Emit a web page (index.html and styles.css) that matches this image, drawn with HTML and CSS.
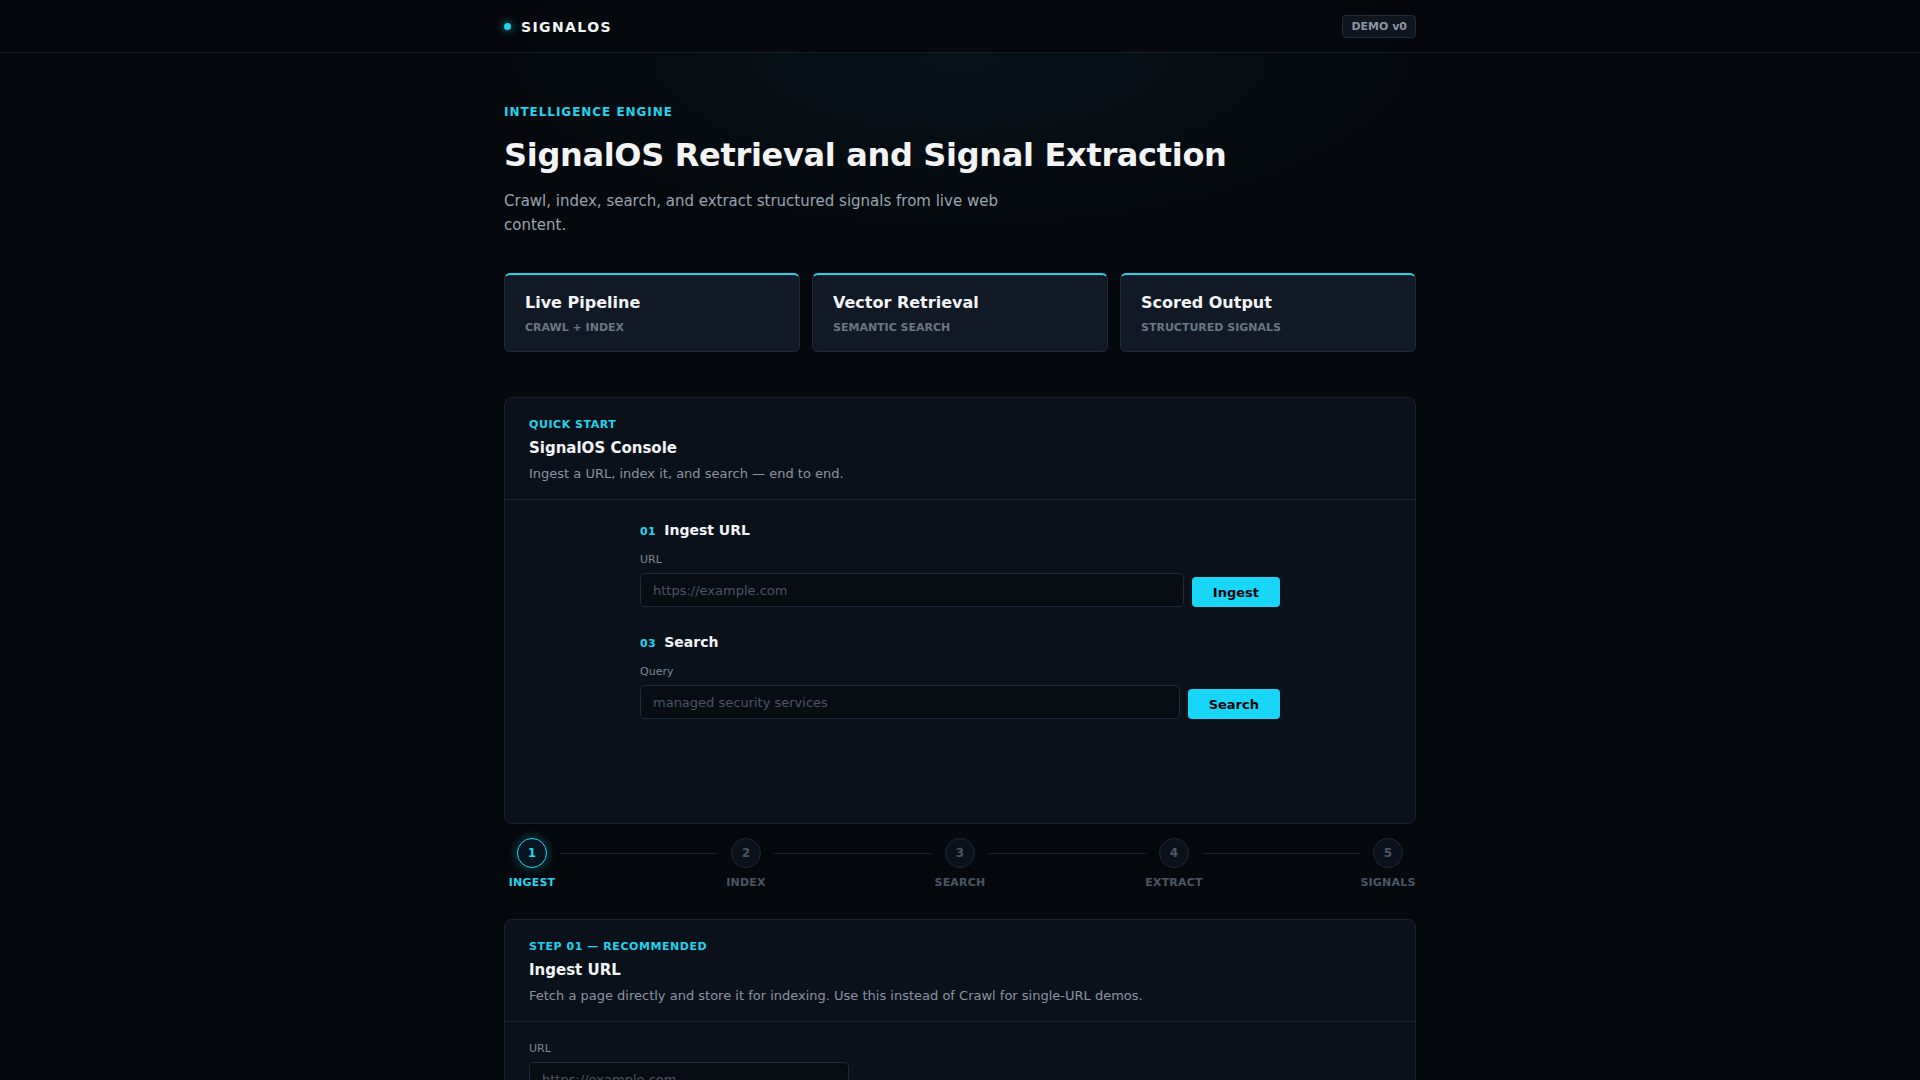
FILE: index.html
```html
<!DOCTYPE html>
<html lang="en">
<head>
<meta charset="UTF-8">
<meta name="viewport" content="width=device-width, initial-scale=1.0">
<title>SignalOS</title>
<link rel="stylesheet" href="styles.css">
</head>
<body>

<header class="topbar">
    <div class="topbar-inner">
        <div class="brand"><span class="brand-dot"></span>SIGNALOS</div>
        <span class="badge">DEMO v0</span>
    </div>
</header>

<main class="page">
    <section class="hero">
        <p class="eyebrow">INTELLIGENCE ENGINE</p>
        <h1>SignalOS Retrieval and Signal Extraction</h1>
        <p class="lead">Crawl, index, search, and extract structured signals from live web content.</p>
    </section>

    <div class="features">
        <div class="feature">
            <h3>Live Pipeline</h3>
            <p>CRAWL + INDEX</p>
        </div>
        <div class="feature">
            <h3>Vector Retrieval</h3>
            <p>SEMANTIC SEARCH</p>
        </div>
        <div class="feature">
            <h3>Scored Output</h3>
            <p>STRUCTURED SIGNALS</p>
        </div>
    </div>

    <div class="panel">
        <div class="panel-head">
            <p class="kicker">QUICK START</p>
            <h2>SignalOS Console</h2>
            <p class="desc">Ingest a URL, index it, and search — end to end.</p>
        </div>
        <div class="panel-body console-body">
            <div class="console-form">
                <div class="step-block">
                    <h4><span class="num">01</span>Ingest URL</h4>
                    <label class="field-label">URL</label>
                    <div class="field-row">
                        <input type="text" class="field" placeholder="https://example.com">
                        <button class="btn">Ingest</button>
                    </div>
                </div>
                <div class="step-block">
                    <h4><span class="num">03</span>Search</h4>
                    <label class="field-label">Query</label>
                    <div class="field-row">
                        <input type="text" class="field" placeholder="managed security services">
                        <button class="btn btn-wide">Search</button>
                    </div>
                </div>
            </div>
        </div>
    </div>

    <div class="stepper">
        <div class="step active"><span class="circle">1</span><span class="step-name">INGEST</span></div>
        <div class="connector"></div>
        <div class="step"><span class="circle">2</span><span class="step-name">INDEX</span></div>
        <div class="connector"></div>
        <div class="step"><span class="circle">3</span><span class="step-name">SEARCH</span></div>
        <div class="connector"></div>
        <div class="step"><span class="circle">4</span><span class="step-name">EXTRACT</span></div>
        <div class="connector"></div>
        <div class="step"><span class="circle">5</span><span class="step-name">SIGNALS</span></div>
    </div>

    <div class="panel">
        <div class="panel-head">
            <p class="kicker">STEP 01 — RECOMMENDED</p>
            <h2>Ingest URL</h2>
            <p class="desc">Fetch a page directly and store it for indexing. Use this instead of Crawl for single-URL demos.</p>
        </div>
        <div class="panel-body">
            <label class="field-label">URL</label>
            <input type="text" class="field field-short" placeholder="https://example.com">
        </div>
    </div>
</main>

</body>
</html>
```

FILE: styles.css
```css
* {
    box-sizing: border-box;
}

body {
    font-family: "DejaVu Sans", sans-serif;
    background-color: #05080d;
    background-image: radial-gradient(ellipse 520px 200px at 50% 52px, rgba(34, 211, 238, 0.05), transparent);
    background-repeat: no-repeat;
    color: #f3f4f6;
    margin: 0;
    padding: 0;
}

p, h1, h2, h3, h4 {
    margin: 0;
}

.topbar {
    height: 53px;
    border-bottom: 1px solid #161c25;
    background-color: rgba(5, 8, 12, 0.9);
}

.topbar-inner {
    max-width: 912px;
    height: 52px;
    margin: 0 auto;
    display: flex;
    align-items: center;
    justify-content: space-between;
}

.brand {
    display: flex;
    align-items: center;
    gap: 10px;
    font-size: 14px;
    font-weight: bold;
    letter-spacing: 0.1em;
    color: #f3f4f6;
    padding-top: 1px;
}

.brand-dot {
    width: 7px;
    height: 7px;
    border-radius: 50%;
    background-color: #22d3ee;
    box-shadow: 0 0 9px rgba(34, 211, 238, 0.85);
}

.badge {
    font-size: 11px;
    font-weight: bold;
    line-height: 15px;
    color: #8a94a3;
    background-color: #0f151e;
    border: 1px solid #222b38;
    border-radius: 4px;
    padding: 3px 8px;
}

.page {
    max-width: 912px;
    margin: 0 auto;
    padding-bottom: 40px;
}

.hero {
    padding-top: 51px;
}

.eyebrow {
    font-size: 12px;
    font-weight: bold;
    line-height: 16px;
    letter-spacing: 0.08em;
    color: #22d3ee;
}

.hero h1 {
    margin-top: 15px;
    font-size: 32px;
    line-height: 40px;
    letter-spacing: -0.01em;
    color: #f3f4f6;
}

.lead {
    margin-top: 14px;
    max-width: 520px;
    font-size: 15px;
    line-height: 24px;
    color: #9aa3af;
}

.features {
    display: grid;
    grid-template-columns: repeat(3, 1fr);
    gap: 12px;
    margin-top: 36px;
}

.feature {
    background-color: #111926;
    border: 1px solid #1f2937;
    border-top: 2px solid #22d3ee;
    border-radius: 6px;
    padding: 17px 20px 16px;
}

.feature h3 {
    font-size: 16px;
    line-height: 22px;
    color: #f3f4f6;
}

.feature p {
    margin-top: 7px;
    font-size: 11px;
    font-weight: bold;
    line-height: 14px;
    color: #6b7584;
}

.panel {
    background-color: #0b111a;
    border: 1px solid #1a2230;
    border-radius: 8px;
    margin-top: 45px;
}

.panel-head {
    padding: 19px 24px 15px;
    border-bottom: 1px solid #1a2230;
}

.kicker {
    font-size: 11px;
    font-weight: bold;
    line-height: 16px;
    letter-spacing: 0.05em;
    color: #22d3ee;
}

.panel-head h2 {
    margin-top: 3px;
    font-size: 15px;
    line-height: 24px;
    color: #f3f4f6;
}

.desc {
    margin-top: 4px;
    font-size: 13px;
    line-height: 20px;
    color: #8b93a1;
}

.panel-body {
    padding: 20px 24px;
}

.console-body {
    min-height: 323px;
}

.console-form {
    max-width: 640px;
    margin: 0 auto;
}

.step-block + .step-block {
    margin-top: 25px;
}

.step-block h4 {
    display: flex;
    align-items: baseline;
    gap: 8px;
    font-size: 14px;
    line-height: 20px;
    color: #f3f4f6;
    margin-bottom: 11px;
}

.num {
    font-size: 11px;
    color: #22d3ee;
    letter-spacing: 0.04em;
}

.field-label {
    display: block;
    font-size: 11px;
    line-height: 14px;
    color: #7c8594;
    margin-bottom: 6px;
}

.field-row {
    display: flex;
    align-items: flex-end;
    gap: 8px;
}

.field {
    flex: 1;
    height: 34px;
    background-color: #080c13;
    border: 1px solid #1f2937;
    border-radius: 5px;
    padding: 0 12px;
    font-family: "DejaVu Sans", sans-serif;
    font-size: 13px;
    color: #e5e7eb;
    outline: none;
}

.field::placeholder {
    color: #4b5563;
}

.field-short {
    display: block;
    width: 320px;
}

.btn {
    height: 30px;
    padding: 0 21px;
    background-color: #17d6f8;
    color: #05080d;
    border: none;
    border-radius: 4px;
    font-family: "DejaVu Sans", sans-serif;
    font-size: 13px;
    font-weight: bold;
    cursor: pointer;
}

.stepper {
    display: flex;
    align-items: flex-start;
    margin-top: 14px;
}

.step {
    width: 56px;
    display: flex;
    flex-direction: column;
    align-items: center;
    gap: 8px;
}

.circle {
    width: 30px;
    height: 30px;
    border-radius: 50%;
    border: 1px solid #1f2937;
    background-color: #0b111a;
    display: flex;
    align-items: center;
    justify-content: center;
    font-size: 12px;
    font-weight: bold;
    color: #4b5563;
}

.step-name {
    font-size: 11px;
    font-weight: bold;
    line-height: 14px;
    letter-spacing: 0.02em;
    color: #4b5563;
}

.step.active .circle {
    border: 1.5px solid #22d3ee;
    color: #22d3ee;
    background-color: #081420;
    box-shadow: 0 0 12px rgba(34, 211, 238, 0.35);
}

.step.active .step-name {
    color: #22d3ee;
}

.connector {
    flex: 1;
    height: 1px;
    margin-top: 15px;
    background-color: #1a2230;
}

.stepper + .panel {
    margin-top: 29px;
}
```
